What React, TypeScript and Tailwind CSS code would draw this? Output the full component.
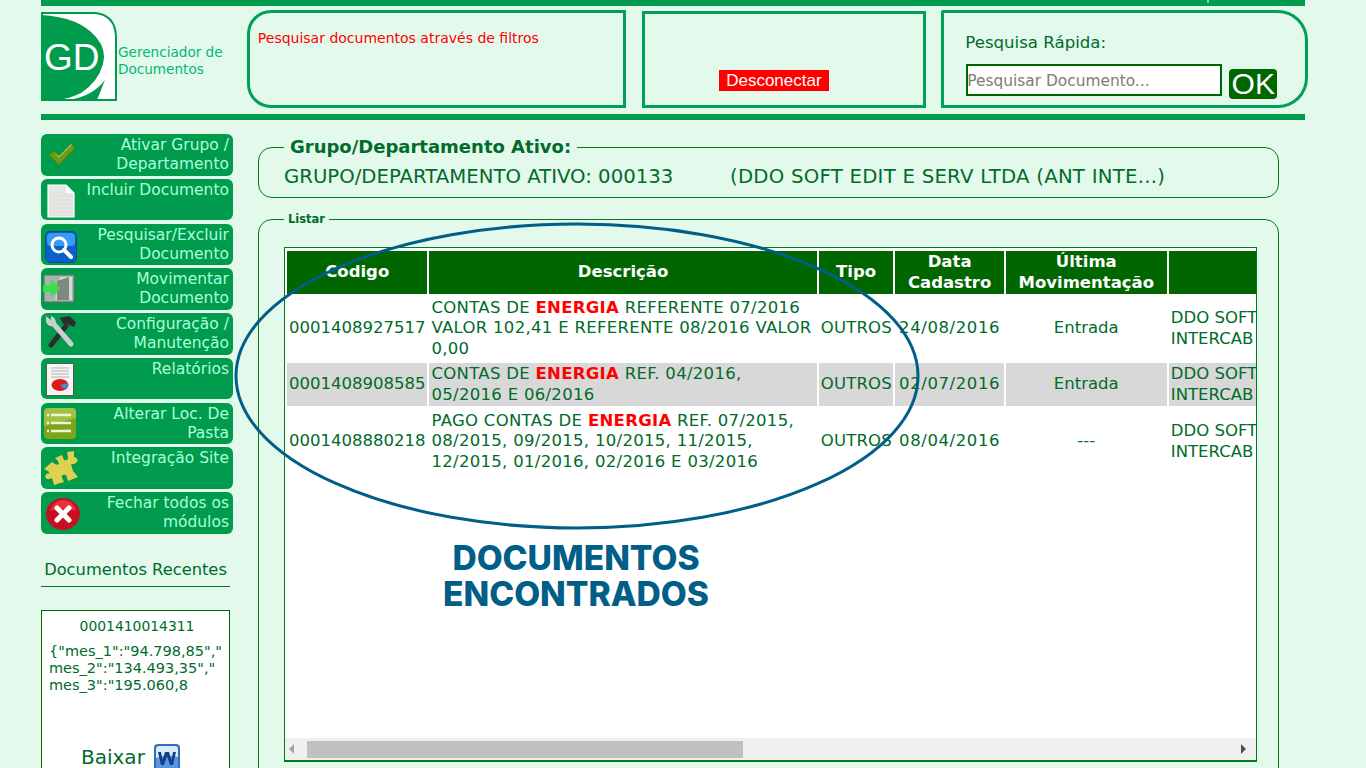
const F = "[font-family:'DejaVu_Sans',Verdana,sans-serif]";

function Logo() {
  return (
    <svg width="76" height="89" viewBox="0 0 76 89" className="shrink-0">
      <path d="M1 1H54Q74 3 75 24V88H1Z" fill="#fff" stroke="#009b4d" strokeWidth="2" />
      <path d="M0 3Q38 5 55 25Q66 38 62 52Q57 70 40 81Q30 86 18 88H0Z" fill="#009b4d" />
      <path d="M28 88Q52 84 64 68Q60 78 56 88Z" fill="#009b4d" />
      <text x="3" y="58" fill="#fff" fontSize="37" fontFamily="'Liberation Sans',sans-serif">GD</text>
    </svg>
  );
}

const icons: Record<string, React.ReactNode> = {
  check: (
    <svg width="28" height="23" viewBox="0 0 28 23">
      <path d="M1 12L6 8L11 14L23 1L27 5L11 22Z" fill="#6d9a12" stroke="#54820a" strokeWidth="1" />
      <path d="M6 9L11 15L24 2L23 1L11 13Z" fill="#9fc040" />
    </svg>
  ),
  doc: (
    <svg width="28" height="34" viewBox="0 0 28 34">
      <path d="M1 1H19L27 9V33H1Z" fill="#e6e6e2" stroke="#fff" strokeWidth="1.2" />
      <path d="M19 1V9H27Z" fill="#fff" />
      <path d="M5 12H23M5 16H23M5 20H23M5 24H23M5 28H23" stroke="#dcdcd8" strokeWidth="1" />
    </svg>
  ),
  search: (
    <svg width="32" height="32" viewBox="0 0 32 32">
      <rect x="0.5" y="0.5" width="31" height="31" rx="5" fill="#0a5fd0" stroke="#064a8c" />
      <rect x="2" y="2" width="28" height="13" rx="4" fill="#3b9bf0" />
      <circle cx="14" cy="14" r="7" fill="none" stroke="#fff" strokeWidth="3" />
      <path d="M19 19L26 26" stroke="#fff" strokeWidth="4" strokeLinecap="round" />
    </svg>
  ),
  move: (
    <svg width="32" height="29" viewBox="0 0 32 29">
      <rect x="1" y="1" width="30" height="27" fill="#a9b3ad" stroke="#5d6d63" />
      <path d="M17 3H29V26H12Z" fill="#d6dad7" />
      <path d="M14 7L26 3V26L14 26Z" fill="#7d8a82" />
      <path d="M0 11H8V5L17 14L8 23V18H0Z" fill="#35e04a" />
    </svg>
  ),
  tools: (
    <svg width="32" height="33" viewBox="0 0 32 33">
      <path d="M6 29L21 10" stroke="#2e2e2e" strokeWidth="5" strokeLinecap="round" />
      <path d="M15 2L24 0L31 6L29 11L22 8L19 9Z" fill="#2c2c2c" />
      <path d="M7 6L26 28" stroke="#c8cfcf" strokeWidth="5" strokeLinecap="round" />
      <path d="M1 0L6 4L6 0Q11 2 11 7Q10 11 5 10Q0 9 1 0Z" fill="#c8cfcf" />
    </svg>
  ),
  report: (
    <svg width="28" height="33" viewBox="0 0 28 33">
      <rect x="0.5" y="0.5" width="27" height="32" fill="#f4f4f4" stroke="#4d5f55" />
      <path d="M5 5H23M5 8H23M5 11H23M5 14H23" stroke="#c8c8c8" strokeWidth="1.5" />
      <ellipse cx="14" cy="22" rx="8.5" ry="6" fill="#e01818" />
      <path d="M14 22L22 20Q23 24 18 26Z" fill="#3d8fd0" />
    </svg>
  ),
  list: (
    <svg width="32" height="31" viewBox="0 0 32 31">
      <rect width="32" height="31" rx="4" fill="#7da51b" />
      <path d="M4 0H28Q32 0 32 4V10L0 18V4Q0 0 4 0Z" fill="#a0c143" />
      <path d="M7 7H27M7 15H27M7 23H27" stroke="#eef5d8" strokeWidth="2.5" />
      <path d="M3 7H5M3 15H5M3 23H5" stroke="#eef5d8" strokeWidth="2.5" />
    </svg>
  ),
  puzzle: (
    <svg width="36" height="34" viewBox="0 0 36 34">
      <path d="M1 18L9 11Q14 15 16 13Q15 9 12 7L19 4L21 9Q25 10 25 6L24 1L31 0L31 6Q36 7 34 11Q31 14 28 13L30 20L35 26L25 30L23 24Q18 23 19 27L21 31L11 34L9 27Q3 30 2 25Q4 21 7 23L5 20Z" fill="#dfd04f" />
    </svg>
  ),
  close: (
    <svg width="34" height="32" viewBox="0 0 34 32">
      <ellipse cx="17" cy="16" rx="17" ry="16" fill="#c70f22" />
      <path d="M4 13Q8 2 17 2Q27 2 30 13Q17 8 4 13Z" fill="#ea3040" />
      <path d="M11 10L23 22M23 10L11 22" stroke="#fff" strokeWidth="5" strokeLinecap="round" />
    </svg>
  ),
};

const menu = [
  { i: "check", t: ["Ativar Grupo /", "Departamento"], x: "ml-[7px] mt-[7px]" },
  { i: "doc", t: ["Incluir Documento"], x: "ml-[6px] mt-[3px]" },
  { i: "search", t: ["Pesquisar/Excluir", "Documento"], x: "ml-[4px] mt-[5px]" },
  { i: "move", t: ["Movimentar", "Documento"], x: "ml-[2px] mt-[4px]" },
  { i: "tools", t: ["Configuração /", "Manutenção"], x: "ml-[4px] mt-[1px]" },
  { i: "report", t: ["Relatórios"], x: "ml-[5px] mt-[3px]" },
  { i: "list", t: ["Alterar Loc. De", "Pasta"], x: "ml-[3px] mt-[3px]" },
  { i: "puzzle", t: ["Integração Site"], x: "ml-[2px] mt-[2px]" },
  { i: "close", t: ["Fechar todos os", "módulos"], x: "ml-[5px] mt-[4px]" },
];

function En() {
  return <b className="text-[#ff0000]">ENERGIA</b>;
}

const rows = [
  {
    c: "0001408927517",
    d: <>CONTAS DE <En /> REFERENTE 07/2016<br />VALOR 102,41 E REFERENTE 08/2016 VALOR<br />0,00</>,
    dt: "24/08/2016",
    m: "Entrada",
    h: "h-[65px]",
    bg: "bg-white",
  },
  {
    c: "0001408908585",
    d: <>CONTAS DE <En /> REF. 04/2016,<br />05/2016 E 06/2016</>,
    dt: "02/07/2016",
    m: "Entrada",
    h: "h-[43px]",
    bg: "bg-[#d8d8d8]",
  },
  {
    c: "0001408880218",
    d: <>PAGO CONTAS DE <En /> REF. 07/2015,<br />08/2015, 09/2015, 10/2015, 11/2015,<br />12/2015, 01/2016, 02/2016 E 03/2016</>,
    dt: "08/04/2016",
    m: "---",
    h: "h-[67px]",
    bg: "bg-white",
  },
];

export default function App() {
  return (
    <div className={`relative h-[768px] w-[1366px] overflow-hidden bg-[#e3f9ec] pl-[41px] ${F}`}>
      <div className="relative h-[6px] w-[1264px] bg-[#009b4d]">
        <span className="absolute left-[1166px] top-0 h-[3px] w-[2px] bg-[#8fd0a0]" />
      </div>
      <header className="flex h-[108px] w-[1267px] items-start pt-[4px]">
        <div className="mt-[2px] flex w-[206px] items-end">
          <Logo />
          <p className="mb-[24px] ml-[1px] text-[13.6px] leading-[16.5px] text-[#00b873]">
            Gerenciador de<br />Documentos
          </p>
        </div>
        <div className="h-[98px] w-[379px] rounded-l-[24px] border-[3px] border-[#00a05a] pl-[8px] pt-[16px] text-[14px] leading-[19px] text-[#ff0000]">
          Pesquisar documentos através de filtros
        </div>
        <div className="ml-[16px] mt-[1px] flex h-[97px] w-[285px] items-end justify-center border-[3px] border-[#00a05a] pb-[14px] pr-[20px]">
          <span className="flex h-[21px] w-[110px] items-center justify-center bg-[#ff0000] font-['Liberation_Sans',sans-serif] text-[17px] text-white">
            Desconectar
          </span>
        </div>
        <div className="ml-[15px] h-[98px] w-[367px] rounded-r-[30px] rounded-tl-[2px] border-[3px] border-[#00a05a] pl-[22px] pt-[20px]">
          <p className="-ml-[1px] text-[16.6px] leading-[20px] text-[#006b2a]">Pesquisa Rápida:</p>
          <div className="mt-[11px] flex items-start">
            <div className="flex h-[32px] w-[256px] items-center border-2 border-[#006600] bg-white pt-[3px] text-[15.4px] text-[#7c7c7c]">
              <span className="-ml-[1px]">Pesquisar Documento...</span>
            </div>
            <button className="ml-[7px] mt-[5px] flex h-[30px] w-[48px] items-center justify-center rounded-[4px] bg-[#006600] font-['Liberation_Sans',sans-serif] text-[30px] leading-none text-white">
              OK
            </button>
          </div>
        </div>
      </header>
      <div className="h-[6px] w-[1264px] bg-[#009b4d]" />
      <div className="mt-[14px] flex items-start">
        <aside className="w-[192px] shrink-0">
          <nav className="flex flex-col gap-[3.25px]">
            {menu.map((m) => (
              <div key={m.t[0]} className="flex h-[41.5px] justify-between rounded-[6px] bg-[#009b4d] pr-[4px] pt-[2px]">
                <div className={`${m.x} h-0 shrink-0`}>{icons[m.i]}</div>
                <p className="text-right text-[15.5px] leading-[19px] text-[#a8ffd8]">
                  {m.t.map((l) => (
                    <span key={l} className="block whitespace-nowrap">{l}</span>
                  ))}
                </p>
              </div>
            ))}
          </nav>
          <h3 className="mt-[26px] w-[189px] whitespace-nowrap text-center text-[16.3px] leading-[20px] text-[#006b2a]">Documentos Recentes</h3>
          <div className="mt-[5px] h-[2px] w-[189px] border-b border-[#007a2a] bg-[#e3f9ec]" />
          <div className="mt-[23px] h-[170px] w-[189px] border border-[#006600] bg-white text-[#006b2a]">
            <p className="mt-[6px] pl-[3px] text-center text-[13.9px] leading-[18px]">0001410014311</p>
            <p className="ml-[7px] mt-[8px] w-[180px] whitespace-nowrap text-[14.5px] leading-[17px]">
              {'{"mes_1":"94.798,85","'}<br />{'mes_2":"134.493,35","'}<br />{'mes_3":"195.060,8'}
            </p>
            <div className="mt-[50px] flex items-center gap-[9px] pl-[39px]">
              <span className="text-[20px] leading-[26px]">Baixar</span>
              <svg width="26" height="27" viewBox="0 0 26 27">
                <rect width="26" height="27" rx="4" fill="#2f6cc0" />
                <rect x="2" y="2" width="22" height="22" rx="3" fill="#dce9f8" />
                <path d="M2 14Q13 10 24 13V21Q24 24 21 24H5Q2 24 2 21Z" fill="#5c94dc" />
                <path d="M4 8L7 21H10L13 12L16 21H19L22 8H19L17.5 16L15 8H11L8.5 16L7 8Z" fill="#123f8f" />
              </svg>
            </div>
          </div>
        </aside>
        <main className="ml-[25px] w-[1021px] text-[#006b2a]">
          <fieldset className="mt-[2px] h-[62px] rounded-[14px] border border-[#007a1a] pl-[25px]">
            <legend className="px-[6px] text-[18px] font-bold leading-[22px] text-[#006b2a]">Grupo/Departamento Ativo:</legend>
            <p className="mt-[7px] flex whitespace-pre text-[19.7px] leading-[24px]">
              <span className="w-[446px]">GRUPO/DEPARTAMENTO ATIVO: 000133</span>
              <span className="tracking-[0.25px]">(DDO SOFT EDIT E SERV LTDA (ANT INTE...)</span>
            </p>
          </fieldset>
          <fieldset className="mt-[14px] h-[600px] rounded-t-[14px] border border-[#007a1a] pl-[25px]">
            <legend className="px-[4px] text-[11.5px] font-bold leading-[14px] text-[#006b2a]">Listar</legend>
            <div className="mt-[21px] flex h-[515px] w-[973px] flex-col overflow-hidden border border-b-2 border-[#007a1a] bg-white">
              <div className="flex-1 overflow-hidden pt-[1px]">
                <table className="w-[1096.5px] table-fixed border-separate border-spacing-x-[2.5px] border-spacing-y-[2px] text-[16.5px] leading-[20.5px]">
                  <colgroup>
                    <col className="w-[140px]" />
                    <col className="w-[386px]" />
                    <col className="w-[74.5px]" />
                    <col className="w-[108px]" />
                    <col className="w-[160.5px]" />
                    <col className="w-[210px]" />
                  </colgroup>
                  <thead>
                    <tr className="h-[43px] bg-[#006600] text-white">
                      <th>Código</th>
                      <th>Descrição</th>
                      <th>Tipo</th>
                      <th>Data<br />Cadastro</th>
                      <th>Última<br />Movimentação</th>
                      <th />
                    </tr>
                  </thead>
                  <tbody>
                    {rows.map((r) => (
                      <tr key={r.c} className={`${r.h} ${r.bg}`}>
                        <td className="px-[2px] whitespace-nowrap">{r.c}</td>
                        <td className="px-[2px] whitespace-nowrap tracking-[0.3px]">{r.d}</td>
                        <td className="px-[2px] text-center tracking-[0.2px]">OUTROS</td>
                        <td className="px-[2px] text-center tracking-[0.6px]">{r.dt}</td>
                        <td className="px-[2px] text-center">{r.m}</td>
                        <td className="px-[2px]">DDO SOFT<br />INTERCAB</td>
                      </tr>
                    ))}
                  </tbody>
                </table>
              </div>
              <div className="flex h-[22px] shrink-0 items-center bg-[#f0f0f0]">
                <span className="ml-[4px] h-0 w-0 border-y-[5px] border-r-[5px] border-y-transparent border-r-[#a3a3a3]" />
                <span className="ml-[13px] h-[17px] w-[436px] bg-[#c1c1c1]" />
                <span className="ml-auto mr-[10px] h-0 w-0 border-y-[5px] border-l-[5px] border-y-transparent border-l-[#505050]" />
              </div>
            </div>
          </fieldset>
        </main>
      </div>
      <svg className="pointer-events-none absolute left-[234px] top-[222px]" width="686" height="308" viewBox="0 0 686 308">
        <ellipse cx="343" cy="154" rx="341" ry="152" fill="none" stroke="#005e87" strokeWidth="3" />
      </svg>
      <p className="absolute left-[376px] top-[540px] w-[400px] text-center font-['Inter',sans-serif] text-[33.6px] font-extrabold leading-[36px] text-[#005e87]">
        DOCUMENTOS<br />ENCONTRADOS
      </p>
    </div>
  );
}
